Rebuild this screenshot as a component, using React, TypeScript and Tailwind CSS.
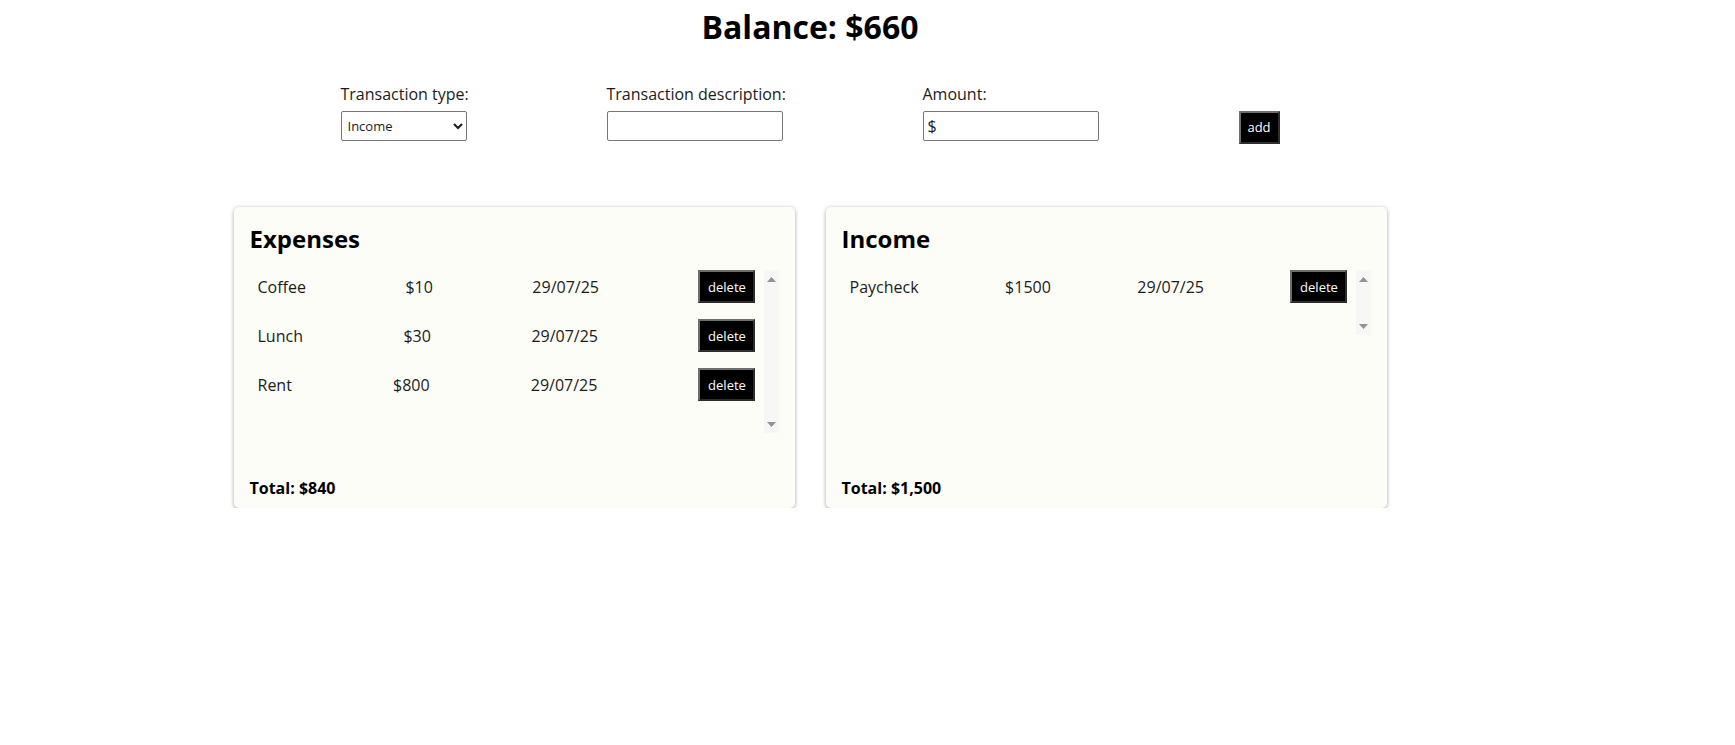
import { useState } from 'react'

interface Transaction {
  id: number
  description: string
  amount: number
  date: string
}

const initialExpenses: Transaction[] = [
  { id: 1, description: 'Coffee', amount: 10, date: '29/07/25' },
  { id: 2, description: 'Lunch', amount: 30, date: '29/07/25' },
  { id: 3, description: 'Rent', amount: 800, date: '29/07/25' }
]

const initialIncome: Transaction[] = [
  { id: 4, description: 'Paycheck', amount: 1500, date: '29/07/25' }
]

const buttonClass =
  'h-[33px] bg-black text-white text-[13px] font-medium border-2 border-t-[#6e6e6e] border-l-[#6e6e6e] border-r-[#2e2e2e] border-b-[#2e2e2e] cursor-pointer'

// Classic scrollbar arrow (up or down)
function Arrow({ down }: { down?: boolean }) {
  return (
    <svg width="9" height="5" viewBox="0 0 9 5">
      <path d={down ? 'M0 0 H9 L4.5 5 Z' : 'M0 5 H9 L4.5 0 Z'} fill="#929292" />
    </svg>
  )
}

function TransactionCard({
  title,
  items,
  onDelete
}: {
  title: string
  items: Transaction[]
  onDelete: (id: number) => void
}) {
  const total = items.reduce((sum, t) => sum + t.amount, 0)

  return (
    <div className="w-[561px] h-[301px] bg-[#fdfdf8] rounded-[5px] shadow-[0_1px_4px_rgba(0,0,0,0.35)] flex flex-col px-4 pt-4 pb-[8px]">
      <h2 className="text-[24px] leading-[32px] font-bold text-black mb-[15px]">{title}</h2>

      {/* List with an always-visible scrollbar track */}
      <div className="flex">
        <ul className="flex-1 overflow-y-auto [scrollbar-width:none] max-h-[163px] pb-8 flex flex-col gap-4">
          {items.map(t => (
            <li key={t.id} className="flex items-center justify-between px-2 h-[33px] shrink-0 text-[16px] leading-6 text-[#1b1b1b]">
              <span>{t.description}</span>
              <span>${t.amount}</span>
              <span>{t.date}</span>
              <button className={`${buttonClass} w-[57px]`} onClick={() => onDelete(t.id)}>
                delete
              </button>
            </li>
          ))}
        </ul>
        <div className="w-[15px] bg-[#f7f7f5] flex flex-col items-center justify-between pt-[7px] pb-[6px]">
          <Arrow />
          <Arrow down />
        </div>
      </div>

      <p className="mt-auto text-[16px] leading-6 font-bold text-black">
        Total: ${total.toLocaleString('en-US')}
      </p>
    </div>
  )
}

export default function App() {
  const [expenses, setExpenses] = useState(initialExpenses)
  const [income, setIncome] = useState(initialIncome)

  const balance =
    income.reduce((s, t) => s + t.amount, 0) - expenses.reduce((s, t) => s + t.amount, 0)

  return (
    <div className="w-[1620px] bg-white font-['Open_Sans',sans-serif] text-[#1b1b1b]">
      <h1 className="pt-[7px] text-center text-[32px] leading-[40px] font-bold text-black">
        Balance: ${balance}
      </h1>

      {/* Add-transaction form */}
      <div className="mt-[35px] flex justify-center gap-[140px]">
        <div className="w-[126px] flex flex-col">
          <label className="text-[16px] leading-6 whitespace-nowrap mb-[5px]">Transaction type:</label>
          <select className="w-[126px] h-[30px] border border-[#767676] rounded-[2px] text-[13px] pl-[2px] bg-white">
            <option>Income</option>
            <option>Expense</option>
          </select>
        </div>
        <div className="w-[176px] flex flex-col">
          <label className="text-[16px] leading-6 whitespace-nowrap mb-[5px]">Transaction description:</label>
          <input className="w-[176px] h-[30px] border border-[#767676] rounded-[2px] px-1 text-[16px]" />
        </div>
        <div className="w-[176px] flex flex-col">
          <label className="text-[16px] leading-6 whitespace-nowrap mb-[5px]">Amount:</label>
          <input
            defaultValue="$"
            className="w-[176px] h-[30px] border border-[#767676] rounded-[2px] px-1 text-[16px]"
          />
        </div>
        <div className="w-[41px]">
          <button className={`${buttonClass} mt-[29px] w-[41px]`}>add</button>
        </div>
      </div>

      <div className="mt-[63px] flex justify-center gap-[31px]">
        <TransactionCard
          title="Expenses"
          items={expenses}
          onDelete={id => setExpenses(expenses.filter(t => t.id !== id))}
        />
        <TransactionCard
          title="Income"
          items={income}
          onDelete={id => setIncome(income.filter(t => t.id !== id))}
        />
      </div>
    </div>
  )
}
